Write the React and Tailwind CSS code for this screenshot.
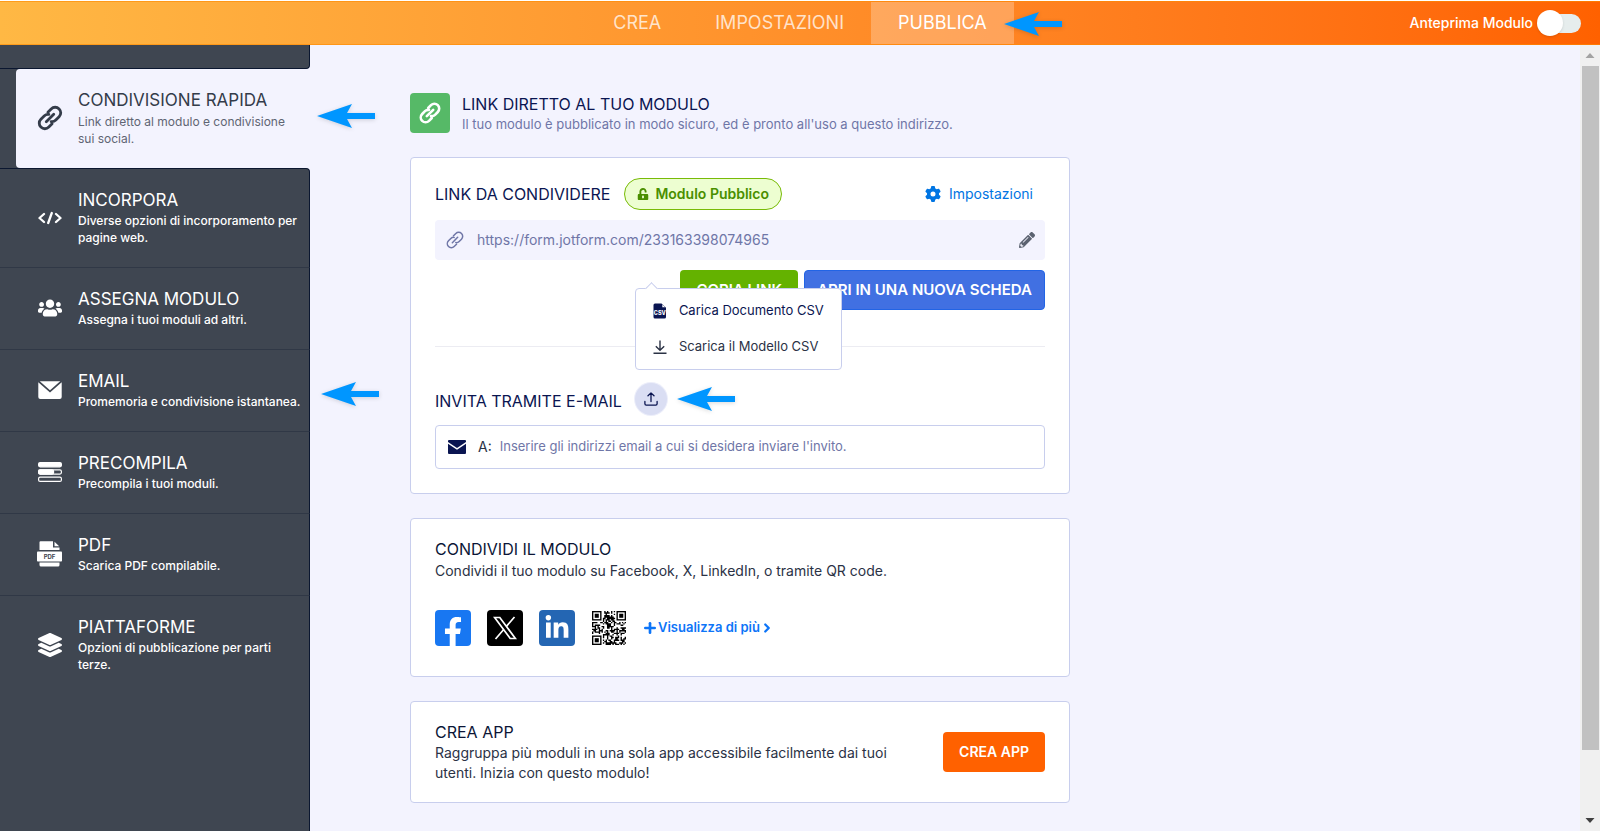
import React, { useState } from 'react';
import { FaFacebookF, FaLinkedinIn, FaUnlockAlt, FaPencilAlt, FaUsers, FaLayerGroup } from 'react-icons/fa';
import { FaGear } from 'react-icons/fa6';
import { Plus, ChevronRight } from 'lucide-react';

const LinkIcon = ({ className, strokeWidth = 2.6 }) => (
  <svg viewBox="0 0 24 24" className={className} fill="none" stroke="currentColor" strokeWidth={strokeWidth} strokeLinecap="round">
    <path d="M10.2 7 13 4.2a4.8 4.8 0 0 1 6.8 6.8L17 13.8a4.8 4.8 0 0 1-4 1.3" />
    <path d="M13.8 17 11 19.8A4.8 4.8 0 0 1 4.2 13L7 10.2a4.8 4.8 0 0 1 4-1.3" />
    <path d="m8.8 15.2 6.4-6.4" />
  </svg>
);

const CodeIcon = () => (
  <svg viewBox="0 0 24 24" className="size-6" fill="none" stroke="currentColor" strokeWidth="2.3" strokeLinecap="round" strokeLinejoin="round">
    <path d="M6 8 1.5 12 6 16M18 8l4.5 4L18 16M13.8 7l-3.6 10" />
  </svg>
);

const MailIcon = () => (
  <svg viewBox="0 0 24 18" className="w-6" fill="currentColor">
    <path d="M1.8.2h20.4L12 9.3z" />
    <path d="M.3 1.3 12 11.6 23.7 1.3V16a2 2 0 0 1-2 2H2.3a2 2 0 0 1-2-2z" />
  </svg>
);

const PrefillIcon = () => (
  <svg viewBox="0 0 24 20" className="w-6" fill="none" stroke="currentColor" strokeWidth="1.2">
    <rect x=".6" y=".6" width="22.8" height="4.2" rx="1.5" fill="currentColor" />
    <rect x=".6" y="7.9" width="22.8" height="4.2" rx="1.5" />
    <rect x=".6" y="7.9" width="15" height="4.2" rx="1.5" fill="currentColor" />
    <rect x=".6" y="15.2" width="22.8" height="4.2" rx="1.5" />
  </svg>
);

const PdfIcon = () => (
  <svg viewBox="0 0 25 26" className="w-[25px]">
    <path d="M3.5.3H16v6.2h6.5V9h-20V1.3a1 1 0 0 1 1-1zM17.500.8l4.700 4.500h-4.700zM2.500 21.500h20V24a1.500 1.500 0 0 1-1.500 1.500H4A1.500 1.500 0 0 1 2.500 24z" fill="currentColor" />
    <rect y="10.500" width="25" height="10" rx=".8" fill="currentColor" />
    <text x="12.500" y="17.800" textAnchor="middle" fontSize="6" fontWeight="700" fill="#3f4651">PDF</text>
  </svg>
);

const CsvIcon = () => (
  <svg viewBox="0 0 14 16" className="w-[14px]">
    <path d="M2 .5h6.500l4.500 4.300V14a1.500 1.500 0 0 1-1.500 1.500H2A1.500 1.500 0 0 1 .5 14V2A1.500 1.500 0 0 1 2 .5z" fill="#0a1551" />
    <path d="M9.300 1.500v2.700h2.900z" fill="#fff" />
    <text x="6.800" y="12.300" textAnchor="middle" fontSize="5.500" fontWeight="800" fill="#fff">CSV</text>
  </svg>
);

const DownloadIcon = () => (
  <svg viewBox="0 0 14 14" className="w-[14px]" fill="none" stroke="#2b3245" strokeWidth="1.4">
    <path d="M7 .5v9.500M2.800 6.200 7 10.200l4.200-4M.5 13.200h13" />
  </svg>
);

const UploadIcon = () => (
  <svg viewBox="0 0 14 14" className="w-[14px]" fill="none" stroke="#0a1551" strokeWidth="1.3" strokeLinecap="round" strokeLinejoin="round">
    <path d="M7 9.500V1M4 3.800 7 .9l3 2.900M.9 9.500v2.300a1.300 1.300 0 0 0 1.300 1.300h9.600a1.300 1.300 0 0 0 1.300-1.300V9.500" />
  </svg>
);

const XLogo = () => (
  <svg viewBox="0 0 24 24" className="size-6" fill="none" stroke="currentColor" strokeWidth="1.7">
    <path d="M1.600 1.500h5.200l15.600 21h-5.200z" />
    <path d="M21.500 1 13.400 10.400M10.700 13.500 2.500 23" />
  </svg>
);

// 25x25 code with three finder squares
const QrIcon = () => {
  const cells = [];
  const inFinder = (x, y) => (x < 8 && y < 8) || (x > 16 && y < 8) || (x < 8 && y > 16);
  let seed = 17;
  for (let y = 0; y < 25; y++) {
    for (let x = 0; x < 25; x++) {
      seed = (seed * 1103515245 + 12345) % 2147483648;
      if (!inFinder(x, y) && seed / 2147483648 > 0.46) cells.push(`M${x} ${y}h1v1h-1z`);
    }
  }
  return (
    <svg viewBox="0 0 25 25" className="size-[34px]">
      <path d={cells.join('')} />
      {[[0, 0], [18, 0], [0, 18]].map(([x, y]) => (
        <g key={`${x}-${y}`}>
          <rect x={x + 0.5} y={y + 0.5} width="6" height="6" fill="none" stroke="#000" />
          <rect x={x + 2} y={y + 2} width="3" height="3" />
        </g>
      ))}
    </svg>
  );
};

const Pointer = ({ className }) => (
  <svg viewBox="0 0 58 24" className={`pointer-events-none absolute z-10 w-[58px] drop-shadow-sm ${className}`} fill="#0096ff">
    <path d="M0 12 35 0l-5 9h28v6H30l5 9z" />
  </svg>
);

const sections = [
  { title: 'CONDIVISIONE RAPIDA', text: 'Link diretto al modulo e condivisione sui social.', icon: <LinkIcon className="size-7" strokeWidth={2.4} />, active: true, pointer: 'left-[317px] top-[35px]' },
  { title: 'INCORPORA', text: 'Diverse opzioni di incorporamento per pagine web.', icon: <CodeIcon /> },
  { title: 'ASSEGNA MODULO', text: 'Assegna i tuoi moduli ad altri.', icon: <FaUsers className="size-6" /> },
  { title: 'EMAIL', text: 'Promemoria e condivisione istantanea.', icon: <MailIcon />, pointer: 'left-[321px] top-[33px]' },
  { title: 'PRECOMPILA', text: 'Precompila i tuoi moduli.', icon: <PrefillIcon /> },
  { title: 'PDF', text: 'Scarica PDF compilabile.', icon: <PdfIcon /> },
  { title: 'PIATTAFORME', text: 'Opzioni di pubblicazione per parti terze.', icon: <FaLayerGroup className="size-6" /> },
];

const TopBar = () => {
  const [preview, setPreview] = useState(false);

  return (
    <header className="mt-px flex h-11 shrink-0 items-stretch border-y border-[#ff8a00]/60 bg-linear-to-r from-[#ffb844] to-[#ff6100] text-white">
      <div className="flex-1 pl-[19px]" />
      <nav className="relative flex text-lg">
        <a href="#crea" className="flex items-center px-[27px] text-white/75">CREA</a>
        <a href="#impostazioni" className="flex items-center px-[27px] text-white/75">IMPOSTAZIONI</a>
        <a href="#pubblica" className="flex items-center bg-white/25 px-[27px]">PUBBLICA</a>
        <Pointer className="-right-12 top-[10px]" />
      </nav>
      <div className="flex flex-1 items-center justify-end pr-[19px]">
        <label className="flex items-center gap-1 text-sm font-medium">
          Anteprima Modulo
          <input type="checkbox" checked={preview} onChange={(e) => setPreview(e.target.checked)} className="peer sr-only" />
          <span className="flex h-[26px] w-11 items-center rounded-full">
            <span className="ml-1 flex h-[19px] flex-1 items-center rounded-full bg-[#e6eded]">
              <span className="-ml-1 size-[26px] rounded-full bg-white shadow" />
            </span>
          </span>
        </label>
      </div>
    </header>
  );
};

const Sidebar = () => (
  <aside className="flex w-[310px] shrink-0 flex-col bg-[#f3f3fe]">
    <div className="h-6 shrink-0 rounded-br border-r border-b border-[#0b1730] bg-[#3f4651]" />
    {sections.map((s, i) => (
      <div key={s.title} className={s.active ? 'relative bg-[#3f4651] pl-4' : 'relative'}>
        <a
          href={`#${s.title.toLowerCase().replace(' ', '-')}`}
          className={
            s.active
              ? 'flex items-center rounded-l bg-[#f3f3fe] pt-5 pr-2 pb-[21px] pl-5 text-[#343c4a]'
              : `flex items-center border-t border-r border-r-[#0b1730] bg-[#3f4651] pt-5 pr-1 pb-[21px] pl-[37px] text-white ${i === 1 ? 'rounded-tr border-t-[#0b1730]' : 'border-t-[#303846]'}`
          }
        >
          <span className={s.active ? 'mr-[14px] flex w-7 justify-center' : 'mr-4 flex w-[25px] shrink-0 justify-center'}>{s.icon}</span>
          <span className={s.active ? 'flex flex-col gap-[2px]' : 'flex flex-col gap-px'}>
            <span className="text-[17px] leading-[22px]">{s.title}</span>
            <span className={s.active ? 'text-xs leading-[17px] text-[#5f6573]' : 'text-xs leading-[17px] font-medium'}>{s.text}</span>
          </span>
        </a>
        {s.pointer && <Pointer className={s.pointer} />}
      </div>
    ))}
    <div className="flex-1 border-r border-[#0b1730] bg-[#3f4651]" />
  </aside>
);

const CsvMenu = () => (
  <div className="absolute bottom-[calc(100%+13px)] left-1/2 z-10 -ml-4 w-[207px] rounded border border-[#c8ceed] bg-white py-[10px] text-[13px] text-[#2b3245]">
    <span className="absolute -top-[5px] left-[11px] size-[9px] rotate-45 border-t border-l border-[#c8ceed] bg-white" />
    <button type="button" className="flex h-6 items-center gap-3 pl-[17px] whitespace-nowrap text-[#0a1551]"><CsvIcon />Carica Documento CSV</button>
    <button type="button" className="mt-3 flex h-6 items-center gap-3 pl-[17px] whitespace-nowrap"><DownloadIcon />Scarica il Modello CSV</button>
  </div>
);

const LinkCard = () => (
  <section className="rounded border border-[#c8ceed] bg-white px-6 pt-5 pb-6">
    <div className="flex h-8 items-center">
      <h2 className="text-base text-[#0a1551]">LINK DA CONDIVIDERE</h2>
      <span className="ml-[14px] flex h-8 items-center gap-[6px] rounded-full border border-[#78bb07] bg-[#edfed1] px-3 text-sm font-semibold text-[#4a8f00]">
        <FaUnlockAlt className="size-3" />
        Modulo Pubblico
      </span>
      <button type="button" className="mr-3 ml-auto flex items-center gap-2 text-sm text-[#0075e3]">
        <FaGear className="size-4" />
        Impostazioni
      </button>
    </div>
    <div className="mt-[10px] flex h-10 items-center rounded bg-[#f3f3fe] px-[10px] text-[#6f76a7]">
      <LinkIcon className="size-5" strokeWidth={1.8} />
      <input aria-label="Link del modulo" readOnly value="https://form.jotform.com/233163398074965" className="ml-3 flex-1 text-sm outline-none" />
      <button type="button" aria-label="Modifica link" className="text-[#5b6270]"><FaPencilAlt className="size-4" /></button>
    </div>
    <div className="mt-[10px] flex justify-end gap-[6px] text-[15px] font-semibold text-white">
      <button type="button" className="h-10 rounded bg-[#64b200] px-4">COPIA LINK</button>
      <button type="button" className="h-10 rounded border border-[#2264e5] bg-[#4170e2] px-3">APRI IN UNA NUOVA SCHEDA</button>
    </div>
    <hr className="mt-9 border-[#ececf2]" />
    <div className="mt-9 flex h-8 items-center">
      <label htmlFor="invite" className="pt-1 text-base text-[#0a1551]">INVITA TRAMITE E-MAIL</label>
      <div className="relative ml-[13px]">
        <button type="button" aria-label="Carica" className="flex size-8 items-center justify-center rounded-full bg-[#dadef3] ring-1 ring-[#eceefa]"><UploadIcon /></button>
        <CsvMenu />
        <Pointer className="top-1 left-[42px]" />
      </div>
    </div>
    <div className="mt-[10px] flex h-11 items-center rounded border border-[#c8ceed] px-3">
      <svg viewBox="0 0 18 14" className="w-[18px]" fill="#0a1551">
        <path d="M1 0h16a1 1 0 0 1 1 1v1L9 8 0 2V1a1 1 0 0 1 1-1z" />
        <path d="m0 3.800 9 6 9-6V13a1 1 0 0 1-1 1H1a1 1 0 0 1-1-1z" />
      </svg>
      <span className="ml-3 text-sm text-[#2b3245]">A:</span>
      <input id="invite" placeholder="Inserire gli indirizzi email a cui si desidera inviare l'invito." className="ml-2 flex-1 text-[13px] outline-none placeholder:text-[#6f76a7]" />
    </div>
  </section>
);

const ShareCard = () => (
  <section className="rounded border border-[#c8ceed] bg-white px-6 pt-[19px] pb-[30px] text-[#0b1536]">
    <h2 className="text-base leading-[22px]">CONDIVIDI IL MODULO</h2>
    <p className="text-sm leading-[22px] text-[#2b3245]">Condividi il tuo modulo su Facebook, X, LinkedIn, o tramite QR code.</p>
    <div className="mt-7 flex items-center gap-4">
      <button type="button" aria-label="Facebook" className="flex size-9 items-end justify-center overflow-hidden rounded-sm bg-[#1877f2] text-white"><FaFacebookF className="-mb-px size-[30px]" /></button>
      <button type="button" aria-label="X" className="flex size-9 items-center justify-center rounded bg-black text-white"><XLogo /></button>
      <button type="button" aria-label="LinkedIn" className="flex size-9 items-center justify-center rounded-sm bg-[#2466b3] text-white"><FaLinkedinIn className="size-[26px]" /></button>
      <button type="button" aria-label="QR code" className="flex size-9 items-center justify-center"><QrIcon /></button>
      <a href="#altro" className="flex items-center text-[13px] font-semibold text-[#0d75f8]">
        <Plus className="-ml-px size-4" strokeWidth={4} />
        Visualizza di più
        <ChevronRight className="size-[14px]" strokeWidth={4} />
      </a>
    </div>
  </section>
);

const AppCard = () => (
  <section className="flex items-center justify-between rounded border border-[#c8ceed] bg-white px-6 py-[19px] text-[#0b1536]">
    <div className="max-w-[480px]">
      <h2 className="text-base leading-[22px]">CREA APP</h2>
      <p className="text-sm leading-5 text-[#2b3245]">Raggruppa più moduli in una sola app accessibile facilmente dai tuoi utenti. Inizia con questo modulo!</p>
    </div>
    <button type="button" className="h-10 rounded bg-[#ff6100] px-4 text-sm font-semibold text-white">CREA APP</button>
  </section>
);

const ScrollRail = () => (
  <div className="flex w-5 shrink-0 flex-col items-center bg-[#f0f0f0] text-[#a3a3a3]">
    <svg viewBox="0 0 20 21" className="h-[21px] shrink-0" fill="currentColor"><path d="m10 8 4.500 5h-9z" /></svg>
    <div className="w-[17px] grow-[92] bg-[#c1c1c1]" />
    <div className="grow-[8]" />
    <svg viewBox="0 0 20 21" className="h-[21px] shrink-0" fill="#404040"><path d="m10 13 4.500-5h-9z" /></svg>
  </div>
);

const App = () => (
  <div className="flex h-screen flex-col overflow-hidden bg-white font-['Inter','Liberation_Sans',sans-serif]">
    <TopBar />
    <div className="flex min-h-0 flex-1">
      <Sidebar />
      <main className="min-w-0 flex-1 overflow-hidden bg-[#f3f3fe] pt-12 pl-[100px]">
        <div className="flex w-full max-w-[660px] flex-col gap-6">
          <div className="flex h-10 items-center gap-3">
            <span className="flex size-10 items-center justify-center rounded bg-[#56b967] text-white"><LinkIcon className="size-6" /></span>
            <div className="pt-[2px]">
              <h1 className="text-base leading-5 text-[#0a1551]">LINK DIRETTO AL TUO MODULO</h1>
              <p className="text-[13px] leading-5 text-[#6f76a7]">Il tuo modulo è pubblicato in modo sicuro, ed è pronto all'uso a questo indirizzo.</p>
            </div>
          </div>
          <LinkCard />
          <ShareCard />
          <AppCard />
        </div>
      </main>
      <ScrollRail />
    </div>
  </div>
);

export default App;
